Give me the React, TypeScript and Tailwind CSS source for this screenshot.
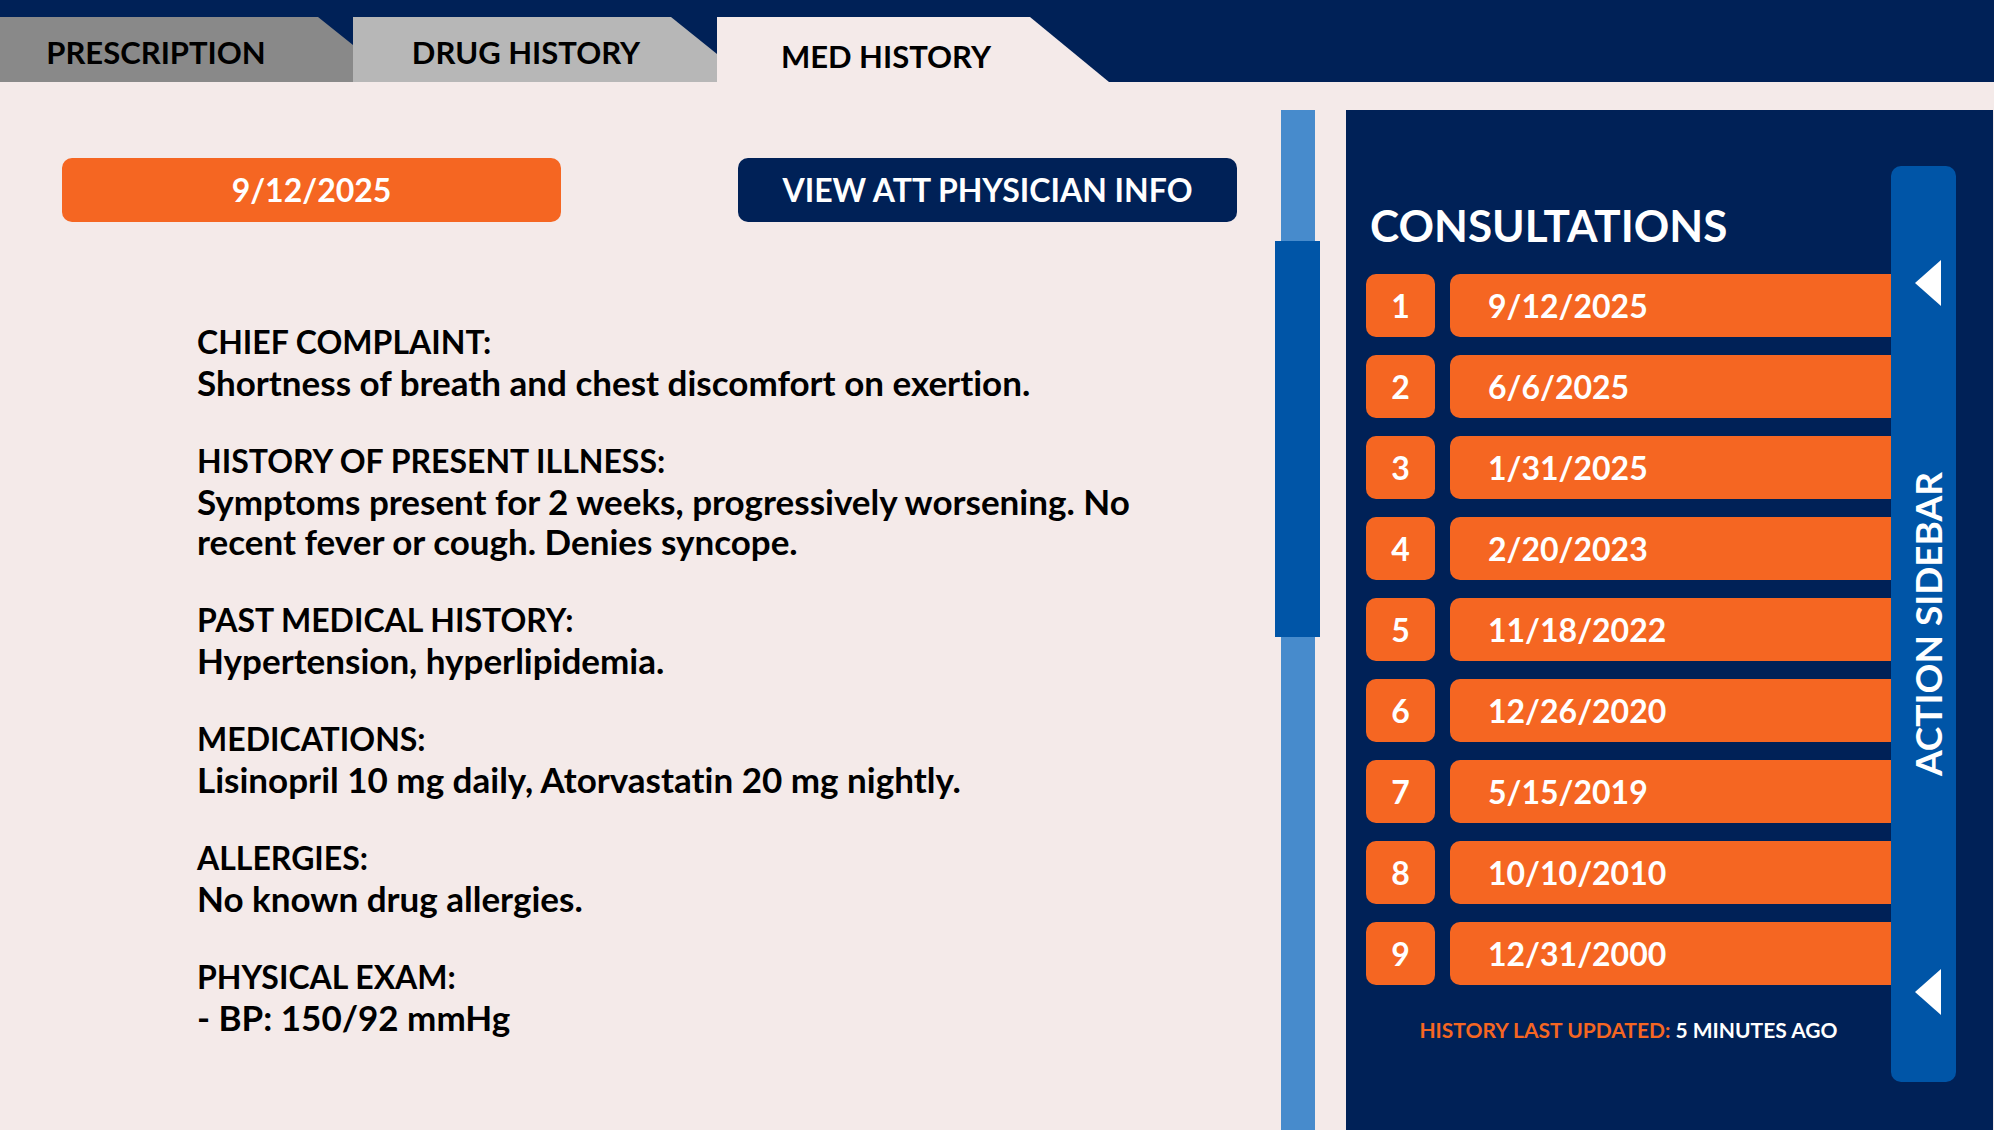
import { useState } from "react";

const TABS = [
  {
    label: "PRESCRIPTION",
    style: "w-[353px] bg-[#898989] pr-[41px] pb-3 [clip-path:polygon(0_0,calc(100%-35px)_0,100%_28px,100%_100%,0_100%)]",
  },
  {
    label: "DRUG HISTORY",
    style: "w-[364px] bg-[#b7b7b7] pr-[18px] pb-3 [clip-path:polygon(0_0,calc(100%-46px)_0,100%_37px,100%_100%,0_100%)]",
  },
  {
    label: "MED HISTORY",
    style: "w-[392px] bg-[#f4eae9] pr-[54px] pb-2 [clip-path:polygon(0_0,calc(100%-79px)_0,100%_100%,0_100%)]",
  },
];

const NOTES = [
  { title: "CHIEF COMPLAINT:", body: "Shortness of breath and chest discomfort on exertion." },
  {
    title: "HISTORY OF PRESENT ILLNESS:",
    body: "Symptoms present for 2 weeks, progressively worsening. No recent fever or cough. Denies syncope.",
  },
  { title: "PAST MEDICAL HISTORY:", body: "Hypertension, hyperlipidemia." },
  { title: "MEDICATIONS:", body: "Lisinopril 10 mg daily, Atorvastatin 20 mg nightly." },
  { title: "ALLERGIES:", body: "No known drug allergies." },
  { title: "PHYSICAL EXAM:", body: "- BP: 150/92 mmHg" },
];

const CONSULTATIONS = [
  "9/12/2025",
  "6/6/2025",
  "1/31/2025",
  "2/20/2023",
  "11/18/2022",
  "12/26/2020",
  "5/15/2019",
  "10/10/2010",
  "12/31/2000",
];

function Arrow() {
  return (
    <svg viewBox="0 0 26 46" className="h-[46px] w-[26px] fill-white" aria-hidden="true">
      <path d="M0 23 26 0V46Z" />
    </svg>
  );
}

function Tabs() {
  const [active, setActive] = useState("MED HISTORY");
  return (
    <header className="bg-[#002157] pt-[17px]">
      <div role="tablist" aria-label="Patient record" className="flex">
        {TABS.map((tab) => (
          <button
            key={tab.label}
            type="button"
            role="tab"
            aria-selected={active === tab.label}
            onClick={() => setActive(tab.label)}
            className={`flex h-[65px] items-end justify-center text-[31px] leading-[36px] text-black ${tab.style}`}
          >
            {tab.label}
          </button>
        ))}
      </div>
    </header>
  );
}

function Notes() {
  return (
    <section className="min-w-0 flex-1 pt-12 pr-[38px] pl-[62px]">
      <div className="flex justify-between gap-8 text-white">
        <button type="button" className="h-16 w-[499px] rounded-[10px] bg-[#f56622] text-[32px]">
          9/12/2025
        </button>
        <button type="button" className="h-16 w-[499px] rounded-[10px] bg-[#002157] text-[32px]">
          VIEW ATT PHYSICIAN INFO
        </button>
      </div>
      <div className="mt-[100px] flex flex-col gap-[39px] pr-14 pl-[135px] leading-[40px]">
        {NOTES.map((note) => (
          <article key={note.title}>
            <h2 className="text-[32px]">{note.title}</h2>
            <p className="text-[35px]">{note.body}</p>
          </article>
        ))}
      </div>
    </section>
  );
}

function ScrollTrack() {
  return (
    <div
      role="scrollbar"
      aria-label="Scroll notes"
      aria-orientation="vertical"
      aria-controls="notes"
      aria-valuenow={15}
      className="flex w-[45px] flex-col items-center"
    >
      <div className="h-[131px] w-[34px] bg-[#478bcc]" />
      <div className="h-[396px] w-full bg-[#0055a7]" />
      <div className="w-[34px] flex-1 bg-[#478bcc]" />
    </div>
  );
}

function Consultations() {
  return (
    <aside className="flex w-[647px] bg-[#002157] pr-[37px] text-white">
      <div className="min-w-0 flex-1">
        <h1 className="mt-[89px] ml-6 text-[44px] leading-[52px]">CONSULTATIONS</h1>
        <ol className="mt-[23px] ml-5 flex flex-col gap-[18px] text-[32px]">
          {CONSULTATIONS.map((date, i) => (
            <li key={date}>
              <button type="button" className="flex h-[63px] w-full gap-[15px] text-left">
                <span className="flex h-full w-[69px] items-center justify-center rounded-[10px] bg-[#f56622]">
                  {i + 1}
                </span>
                <span className="flex h-full flex-1 items-center rounded-l-[10px] bg-[#f56622] pl-[38px]">{date}</span>
              </button>
            </li>
          ))}
        </ol>
        <p className="mt-[30px] ml-5 text-center text-[21px] leading-[30px]">
          <span className="text-[#f56622]">HISTORY LAST UPDATED:</span> 5 MINUTES AGO
        </p>
      </div>
      <button
        type="button"
        className="mt-14 flex h-[916px] w-[65px] flex-col items-center rounded-[10px] bg-[#0055a7] pt-[94px] pb-[67px] pl-2"
      >
        <Arrow />
        <span className="mt-[166px] mb-auto rotate-180 text-[37px] leading-[44px] [writing-mode:vertical-rl]">
          ACTION SIDEBAR
        </span>
        <Arrow />
      </button>
    </aside>
  );
}

export default function App() {
  return (
    <div className="flex min-h-screen flex-col bg-[#f4eae9] font-['Lato',sans-serif] font-bold text-black [font-variant-ligatures:none]">
      <Tabs />
      <main id="notes" className="flex flex-1 pt-7">
        <Notes />
        <ScrollTrack />
        <div className="w-[26px]" />
        <Consultations />
        <div className="w-px" />
      </main>
    </div>
  );
}
